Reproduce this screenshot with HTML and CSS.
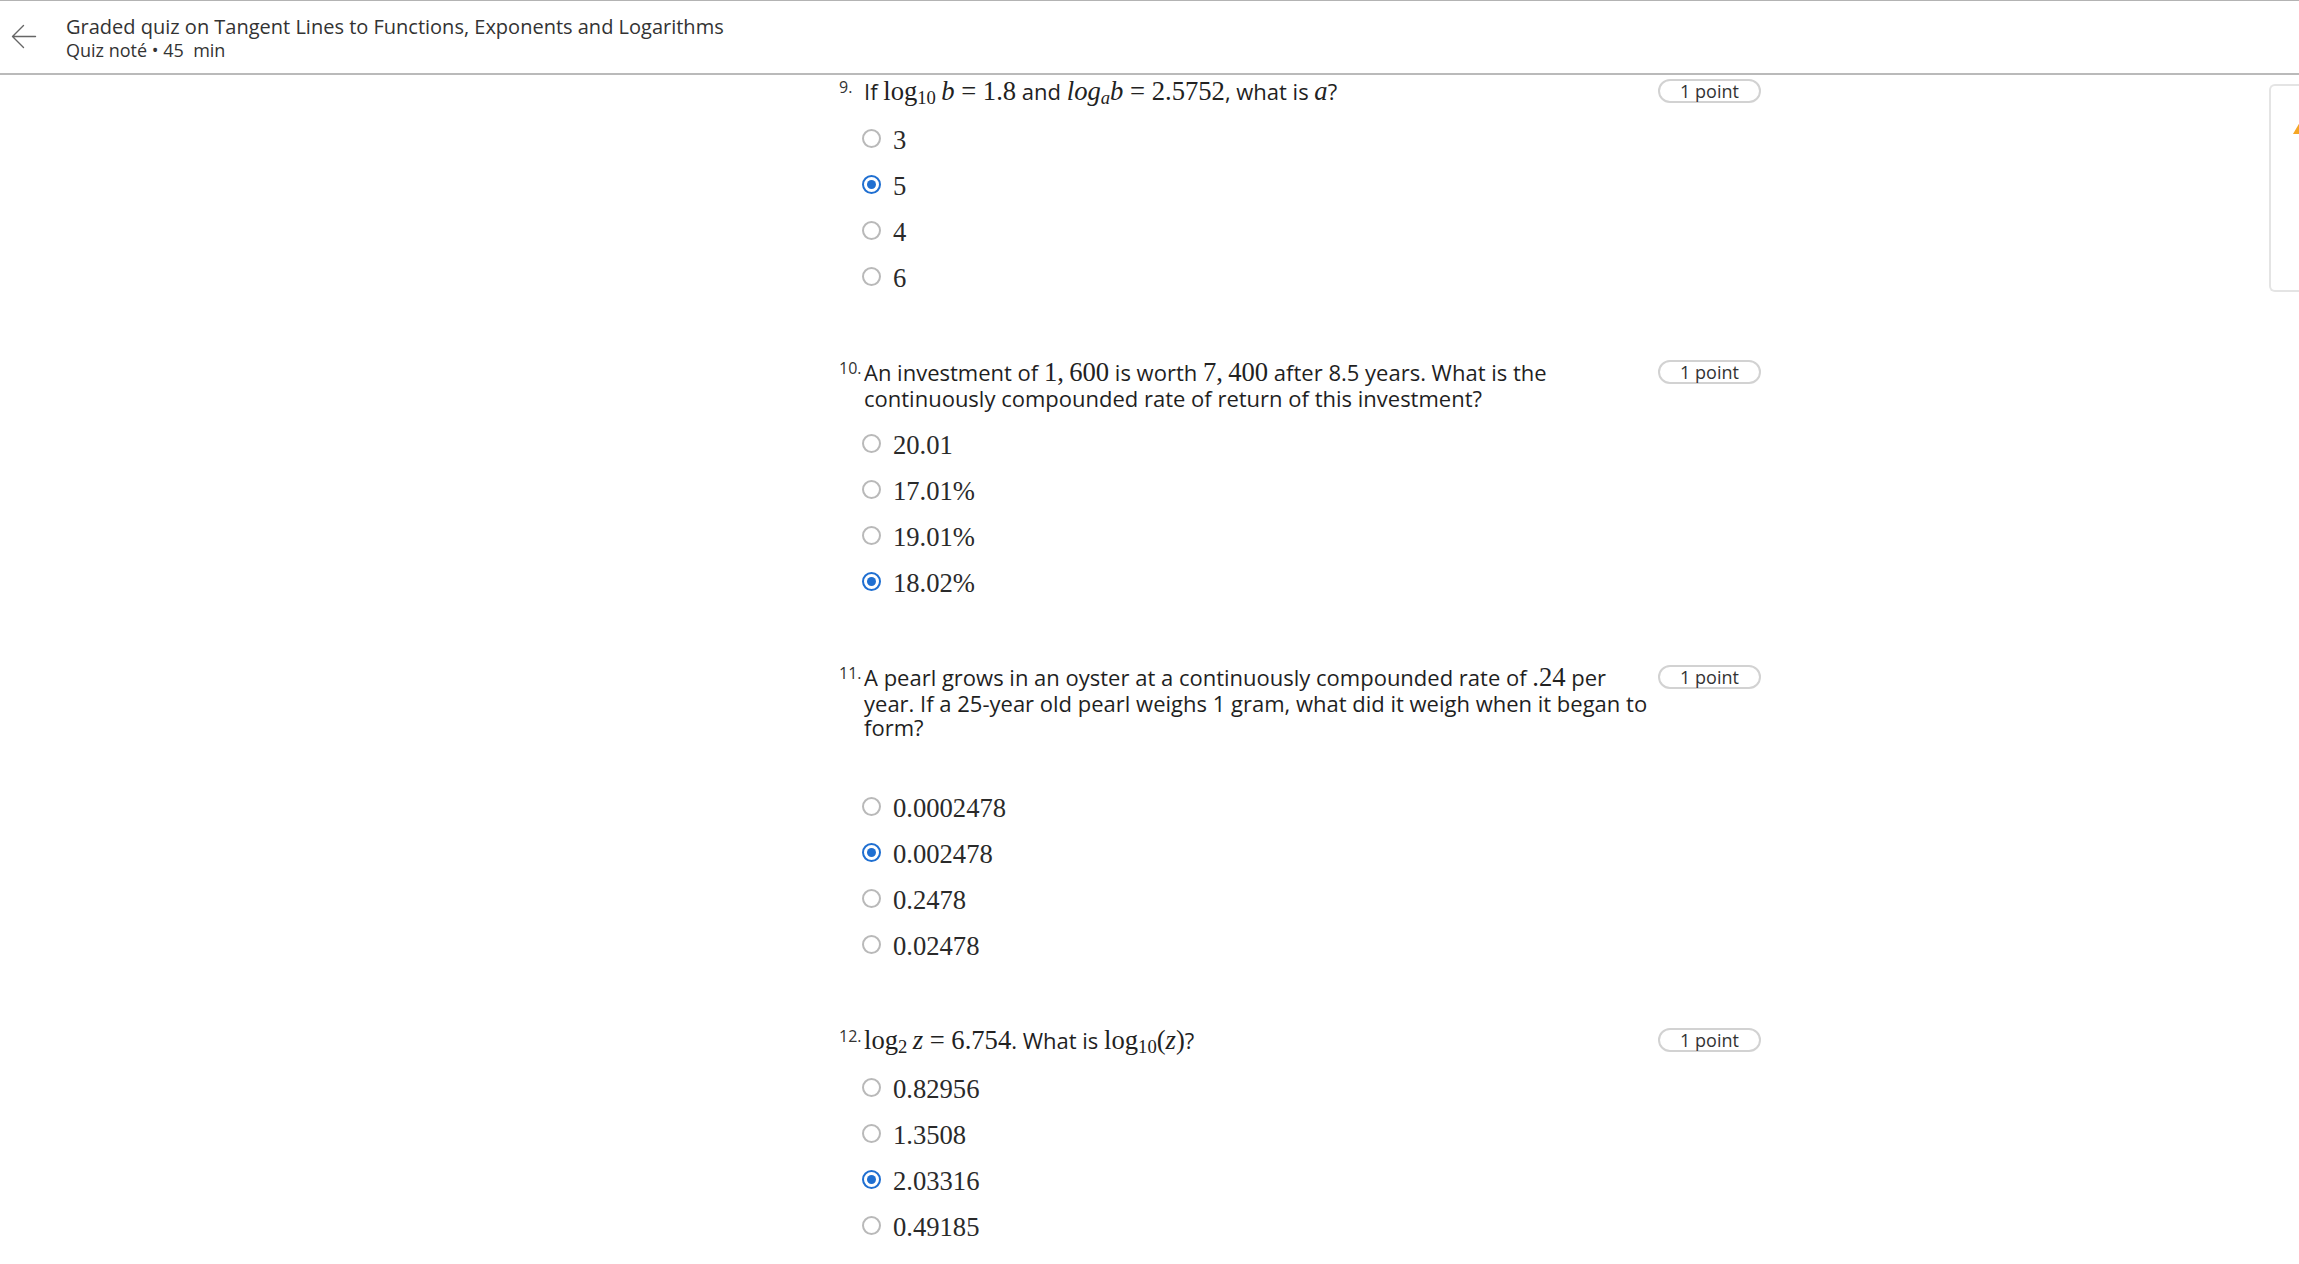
FILE: index.html
```html
<!DOCTYPE html>
<html lang="en">
<head>
<meta charset="utf-8">
<title>Graded quiz</title>
<link rel="stylesheet" href="styles.css">
</head>
<body>
<header class="topbar">
  <span class="back" aria-label="Back">
    <svg width="26" height="26" viewBox="0 0 26 26" fill="none" stroke="#666" stroke-width="1.4" stroke-linecap="round" stroke-linejoin="round">
      <path d="M1.5 12.5 H24.5 M12.5 1.5 L1.5 12.5 L12.5 23.5"/>
    </svg>
  </span>
  <div class="titles">
    <div class="title">Graded quiz on Tangent Lines to Functions, Exponents and Logarithms</div>
    <div class="subtitle">Quiz noté • 45&nbsp; min</div>
  </div>
</header>
<main class="page">
  <div class="nav-space"></div>
  <section class="quiz">
    <div class="question">
      <div class="qhead">
        <span class="qnum">9.</span>
        <div class="qtext">If <span class="m">log<sub>10</sub>&thinsp;<i>b</i> = 1.8</span> and <span class="m"><i>log<sub>a</sub>b</i> = 2.5752</span>, what is <span class="m"><i>a</i></span>?</div>
        <span class="points">1 point</span>
      </div>
      <ul class="options">
        <li class="option"><span class="radio"></span><span class="m">3</span></li>
        <li class="option"><span class="radio checked"></span><span class="m">5</span></li>
        <li class="option"><span class="radio"></span><span class="m">4</span></li>
        <li class="option"><span class="radio"></span><span class="m">6</span></li>
      </ul>
    </div>

    <div class="question">
      <div class="qhead">
        <span class="qnum">10.</span>
        <div class="qtext">An investment of <span class="m">1,&thinsp;600</span> is worth <span class="m">7,&thinsp;400</span> after 8.5 years. What is the continuously compounded rate of return of this investment?</div>
        <span class="points">1 point</span>
      </div>
      <ul class="options">
        <li class="option"><span class="radio"></span><span class="m">20.01</span></li>
        <li class="option"><span class="radio"></span><span class="m">17.01%</span></li>
        <li class="option"><span class="radio"></span><span class="m">19.01%</span></li>
        <li class="option"><span class="radio checked"></span><span class="m">18.02%</span></li>
      </ul>
    </div>

    <div class="question">
      <div class="qhead">
        <span class="qnum">11.</span>
        <div class="qtext">A pearl grows in an oyster at a continuously compounded rate of <span class="m">.24</span> per year. If a 25-year old pearl weighs 1 gram, what did it weigh when it began to form?<div class="blank"></div></div>
        <span class="points">1 point</span>
      </div>
      <ul class="options">
        <li class="option"><span class="radio"></span><span class="m">0.0002478</span></li>
        <li class="option"><span class="radio checked"></span><span class="m">0.002478</span></li>
        <li class="option"><span class="radio"></span><span class="m">0.2478</span></li>
        <li class="option"><span class="radio"></span><span class="m">0.02478</span></li>
      </ul>
    </div>

    <div class="question">
      <div class="qhead">
        <span class="qnum">12.</span>
        <div class="qtext"><span class="m">log<sub>2</sub>&thinsp;<i>z</i> = 6.754</span>. What is <span class="m">log<sub>10</sub>(<i>z</i>)</span>?</div>
        <span class="points">1 point</span>
      </div>
      <ul class="options">
        <li class="option"><span class="radio"></span><span class="m">0.82956</span></li>
        <li class="option"><span class="radio"></span><span class="m">1.3508</span></li>
        <li class="option"><span class="radio checked"></span><span class="m">2.03316</span></li>
        <li class="option"><span class="radio"></span><span class="m">0.49185</span></li>
      </ul>
    </div>
  </section>
  <aside class="side-panel">
    <svg class="warn" width="14" height="12" viewBox="0 0 14 12"><path d="M7 0 L14 12 H0 Z" fill="#f5a623"/></svg>
  </aside>
</main>
</body>
</html>
```

FILE: styles.css
```css
html, body {
  margin: 0;
  padding: 0;
}

body {
  font-family: "Open Sans", "Noto Sans", sans-serif;
  color: #1f1f1f;
  background: #ffffff;
  overflow: hidden;
}

.topbar {
  display: flex;
  align-items: flex-start;
  height: 72px;
  border-top: 1px solid #b3b3b3;
  border-bottom: 2px solid #bababa;
  padding-left: 11px;
}

.back {
  display: block;
  width: 26px;
  height: 26px;
  margin-top: 23px;
  margin-right: 29px;
}

.back svg {
  display: block;
}

.titles {
  padding-top: 14px;
  color: #333333;
}

.title {
  font-size: 20px;
  line-height: 24px;
}

.subtitle {
  font-size: 18px;
  line-height: 23px;
}

.page {
  display: flex;
  align-items: flex-start;
}

.nav-space {
  flex: none;
  width: 839px;
}

.quiz {
  flex: none;
  width: 922px;
  padding-top: 2px;
}

.question + .question {
  margin-top: 57px;
}

.qhead {
  display: flex;
  align-items: flex-start;
}

.qnum {
  flex: none;
  width: 25px;
  font-size: 16px;
  line-height: 20px;
  color: #333333;
  white-space: nowrap;
}

.qtext {
  flex: none;
  width: 786px;
  font-size: 22px;
  line-height: 24px;
  color: #1f1f1f;
}

.blank {
  height: 34px;
}

.points {
  flex: none;
  margin-left: 8px;
  margin-top: 2px;
  width: 99px;
  height: 20px;
  border: 2px solid #d2d2d2;
  border-radius: 12px;
  font-size: 18px;
  line-height: 20px;
  text-align: center;
  color: #333333;
}

.m {
  font-family: "Liberation Serif", "DejaVu Serif", serif;
  font-size: 1.21em;
  line-height: 28px;
  color: #222222;
}

.m i {
  font-style: italic;
}

.m sub {
  font-size: 0.7em;
  line-height: 0;
  vertical-align: -0.22em;
}

.options {
  list-style: none;
  margin: 12px 0 0 23px;
  padding: 0;
}

.option {
  display: flex;
  align-items: center;
  height: 46px;
  font-size: 22px;
}

.option .m {
  line-height: 30px;
  color: #2a2a2a;
}

.radio {
  flex: none;
  box-sizing: border-box;
  width: 19px;
  height: 19px;
  margin-right: 12px;
  margin-top: -4px;
  border: 2px solid #b9b9b9;
  border-radius: 50%;
  background: #ffffff;
  display: flex;
  align-items: center;
  justify-content: center;
}

.radio.checked {
  border: 2.5px solid #1f6fd1;
}

.radio.checked::after {
  content: "";
  width: 9px;
  height: 9px;
  border-radius: 50%;
  background: #1f6fd1;
}

.side-panel {
  flex: none;
  margin-left: auto;
  margin-top: 9px;
  width: 28px;
  height: 204px;
  border: 2px solid #e4e4e4;
  border-right: none;
  border-radius: 6px 0 0 6px;
  position: relative;
  overflow: hidden;
}

.warn {
  position: absolute;
  left: 22px;
  top: 36px;
}
```
